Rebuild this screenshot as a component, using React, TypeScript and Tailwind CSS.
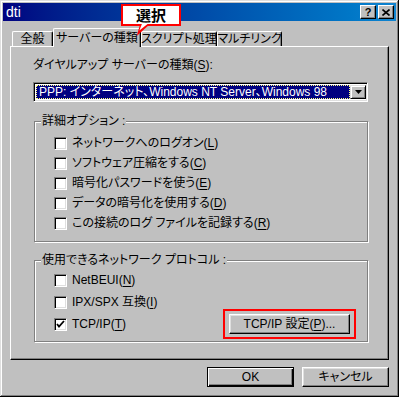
import type { ReactNode } from 'react';

const font = "[font-family:'Liberation_Sans','Noto_Sans_CJK_JP',sans-serif] [font-feature-settings:'palt']";

function Mn({ children }: { children: ReactNode }) {
  return <span className="underline underline-offset-2">{children}</span>;
}

function Check({ checked = false }: { checked?: boolean }) {
  return (
    <div className="w-[13px] h-[13px] shrink-0 bg-white border border-t-[#808080] border-l-[#808080] border-r-white border-b-white shadow-[inset_1px_1px_0_#000,inset_-1px_-1px_0_#dfdfdf] flex items-center justify-center">
      {checked && (
        <svg width="9" height="9" viewBox="0 0 9 9">
          <path d="M1 4 L3 6.5 L8 1" fill="none" stroke="#000" strokeWidth="1.8" />
        </svg>
      )}
    </div>
  );
}

function CheckRow({ label, checked, className = 'h-[20px]' }: { label: ReactNode; checked?: boolean; className?: string }) {
  return (
    <div className={`flex items-center gap-[5px] pl-[19px] ${className}`}>
      <Check checked={checked} />
      <span className="text-[12px] leading-none text-black whitespace-nowrap">{label}</span>
    </div>
  );
}

function Group({ title, className, children }: { title: string; className: string; children: ReactNode }) {
  return (
    <div className={`relative ml-[1px] w-[334px] border border-[#808080] shadow-[inset_1px_1px_0_#fff,1px_1px_0_#fff] ${className}`}>
      {/* 見出し（枠線の上に重ねる） */}
      <span className="absolute -top-[8px] left-[6px] bg-[#c0c0c0] px-[1px] text-[12px] leading-[14px] whitespace-nowrap">{title}</span>
      {children}
    </div>
  );
}

function Tab({ label, active = false, w }: { label: string; active?: boolean; w: string }) {
  return (
    <div
      className={`${w} flex items-center justify-center whitespace-nowrap rounded-t-[2px] border-t border-l border-t-white border-l-white border-r border-r-black shadow-[inset_-1px_0_0_#808080] bg-[#c0c0c0] text-[12px] leading-none text-black ${
        active ? 'h-[19px] -mb-[1px] relative z-10' : 'h-[15px]'
      }`}
    >
      {label}
    </div>
  );
}

function WinButton({ children, w, isDefault = false }: { children: ReactNode; w: string; isDefault?: boolean }) {
  return (
    <button
      type="button"
      className={`${w} h-[20px] bg-[#c0c0c0] text-[12px] text-black flex items-center justify-center whitespace-nowrap border ${
        isDefault
          ? 'border-black shadow-[inset_1px_1px_0_#fff,inset_-1px_-1px_0_#000,inset_-2px_-2px_0_#808080]'
          : 'border-t-white border-l-white border-r-black border-b-black shadow-[inset_-1px_-1px_0_#808080,inset_1px_1px_0_#dfdfdf]'
      }`}
    >
      {children}
    </button>
  );
}

export default function App() {
  return (
    <div className={`${font} w-[399px] h-[397px] bg-[#c0c0c0] p-[3px] relative shadow-[inset_-1px_-1px_0_#000,inset_1px_1px_0_#dfdfdf,inset_-2px_-2px_0_#808080,inset_2px_2px_0_#fff]`}>
      {/* タイトルバー */}
      <div className="h-[18px] flex items-center bg-gradient-to-r from-[#000080] to-[#1084d0] pl-[3px] pr-[2px]">
        <span className="flex-1 text-white text-[14px] leading-none">dti</span>
        <div className="flex gap-[2px]">
          <div className="w-[16px] h-[14px] bg-[#c0c0c0] border border-t-white border-l-white border-r-black border-b-black shadow-[inset_-1px_-1px_0_#808080] flex items-center justify-center text-[11px] font-bold leading-none">
            ?
          </div>
          <div className="w-[16px] h-[14px] bg-[#c0c0c0] border border-t-white border-l-white border-r-black border-b-black shadow-[inset_-1px_-1px_0_#808080] flex items-center justify-center">
            <svg width="8" height="7" viewBox="0 0 8 7">
              <path d="M0.5 0.5 L7.5 6.5 M7.5 0.5 L0.5 6.5" stroke="#000" strokeWidth="1.6" />
            </svg>
          </div>
        </div>
      </div>

      {/* タブ */}
      <div className="mt-[7px] ml-[9px] h-[18px] flex items-end">
        <Tab label="全般" w="w-[41px]" />
        <Tab label="サーバーの種類" active w="w-[88px]" />
        <Tab label="スクリプト処理" w="w-[76px]" />
        <Tab label="マルチリンク" w="w-[65px]" />
      </div>

      {/* タブの中身 */}
      <div className="ml-[7px] w-[379px] h-[314px] border border-t-white border-l-white border-r-black border-b-black shadow-[inset_-1px_-1px_0_#808080] pl-[22px] pt-[10px]">
        <div className="h-[16px] flex items-center text-[12px] whitespace-nowrap">
          ダイヤルアップ サーバーの種類(<Mn>S</Mn>):
        </div>
        <div className="mt-[9px] w-[335px] h-[20px] flex border border-t-[#808080] border-l-[#808080] border-r-white border-b-white shadow-[inset_1px_1px_0_#000,inset_-1px_-1px_0_#dfdfdf] p-[2px] pr-[1px] bg-white">
          <div className="flex-1 bg-[#000080] border border-dotted border-[#ffff80] flex items-center pl-[2px] text-white text-[12px] leading-none whitespace-nowrap">
            PPP: インターネット、Windows NT Server、Windows 98
          </div>
          <div className="w-[16px] bg-[#c0c0c0] border border-t-[#dfdfdf] border-l-[#dfdfdf] border-r-black border-b-black shadow-[inset_1px_1px_0_#fff,inset_-1px_-1px_0_#808080] flex items-center justify-center">
            <svg width="7" height="4" viewBox="0 0 7 4">
              <path d="M0 0 H7 L3.5 4 Z" fill="#000" />
            </svg>
          </div>
        </div>

        <Group title="詳細オプション :" className="mt-[19px] h-[121px] pt-[11px]">
          <CheckRow label={<>ネットワークへのログオン(<Mn>L</Mn>)</>} />
          <CheckRow label={<>ソフトウェア圧縮をする(<Mn>C</Mn>)</>} />
          <CheckRow label={<>暗号化パスワードを使う(<Mn>E</Mn>)</>} />
          <CheckRow label={<>データの暗号化を使用する(<Mn>D</Mn>)</>} />
          <CheckRow label={<>この接続のログ ファイルを記録する(<Mn>R</Mn>)</>} />
        </Group>

        <Group title="使用できるネットワーク プロトコル :" className="mt-[18px] h-[82px] pt-[8px]">
          <CheckRow label={<>NetBEUI(<Mn>N</Mn>)</>} className="h-[22px]" />
          <CheckRow label={<>IPX/SPX 互換(<Mn>I</Mn>)</>} className="h-[22px]" />
          <div className="flex items-center h-[22px] pr-[11px]">
            <CheckRow label={<>TCP/IP(<Mn>T</Mn>)</>} checked className="h-[22px] flex-1" />
            <div className="border-2 border-[#ff0000] px-[4px] py-[3px] -my-[4px]">
              <WinButton w="w-[121px]">
                TCP/IP 設定(<Mn>P</Mn>)...
              </WinButton>
            </div>
          </div>
        </Group>
      </div>

      {/* 下部ボタン */}
      <div className="mt-[7px] flex justify-end gap-[8px] pr-[7px]">
        <WinButton w="w-[87px]" isDefault>
          OK
        </WinButton>
        <WinButton w="w-[87px]">キャンセル</WinButton>
      </div>

      {/* 吹き出し */}
      <div className="absolute left-[121px] top-[4px] w-[60px] h-[22px] z-20">
        <div className="w-full h-full bg-white border-2 border-[#ff0000] flex items-center justify-center text-[15px] font-bold leading-none text-black">
          選択
        </div>
        {/* しっぽ */}
        <div className="absolute left-[15px] top-[20px] w-[14px] h-[12px] bg-[#ff0000] [clip-path:polygon(30%_0,5%_100%,100%_0)]" />
        <div className="absolute left-[15px] top-[20px] w-[14px] h-[12px] bg-white [clip-path:polygon(42%_0,24%_55%,82%_0)]" />
      </div>
    </div>
  );
}
